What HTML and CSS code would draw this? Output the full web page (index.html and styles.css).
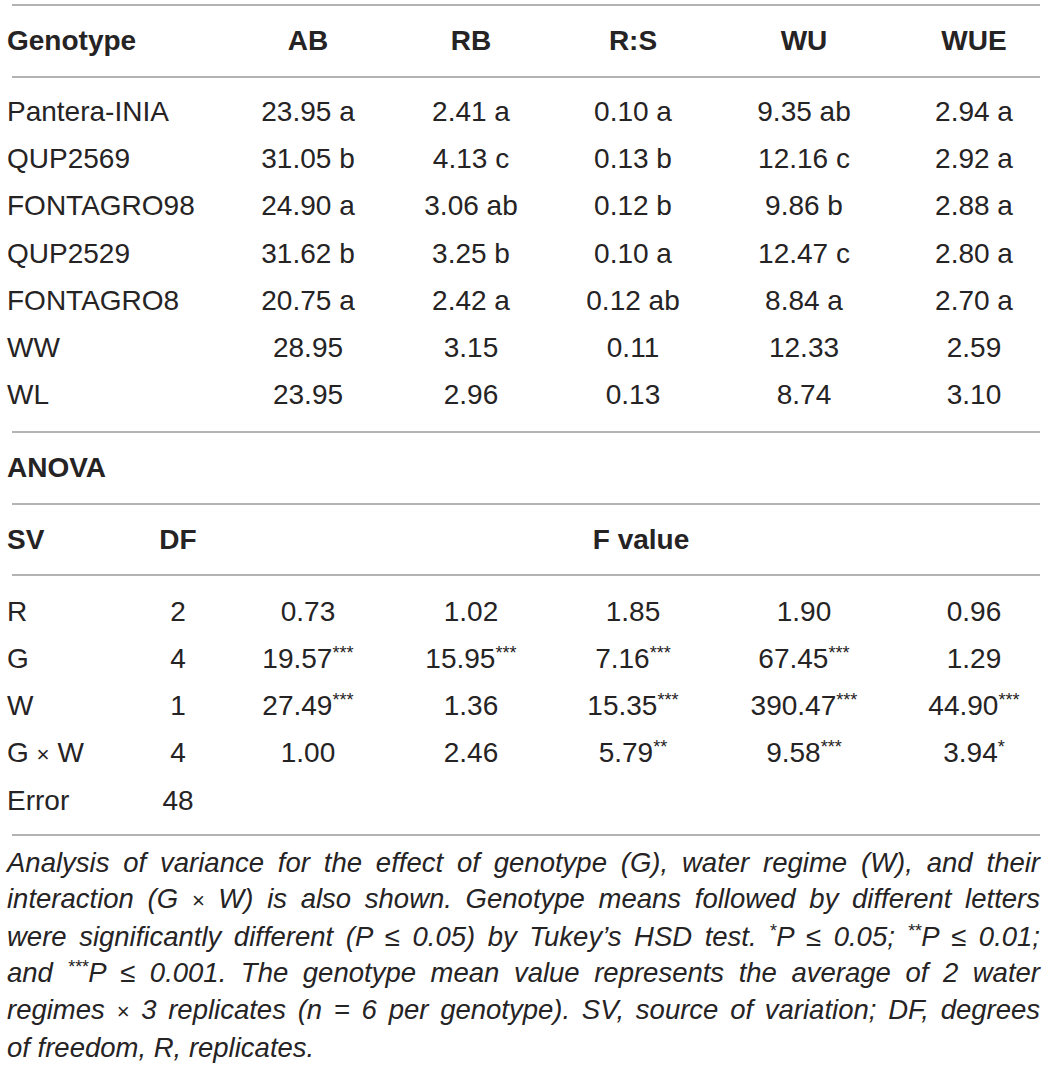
FILE: index.html
```html
<!DOCTYPE html>
<html lang="en">
<head>
    <meta charset="UTF-8">
    <meta name="viewport" content="width=device-width, initial-scale=1.0">
    <title>Genotype and ANOVA table</title>
    <link rel="stylesheet" href="styles.css">
</head>
<body>
    <div class="table">
        <div class="rule"></div>

        <div class="grid head">
            <div class="name span2">Genotype</div>
            <div>AB</div>
            <div>RB</div>
            <div>R:S</div>
            <div>WU</div>
            <div class="last">WUE</div>
        </div>

        <div class="rule"></div>

        <div class="grid body body-top">
            <div class="name span2">Pantera-INIA</div>
            <div>23.95 a</div><div>2.41 a</div><div>0.10 a</div><div>9.35 ab</div><div class="last">2.94 a</div>

            <div class="name span2">QUP2569</div>
            <div>31.05 b</div><div>4.13 c</div><div>0.13 b</div><div>12.16 c</div><div class="last">2.92 a</div>

            <div class="name span2">FONTAGRO98</div>
            <div>24.90 a</div><div>3.06 ab</div><div>0.12 b</div><div>9.86 b</div><div class="last">2.88 a</div>

            <div class="name span2">QUP2529</div>
            <div>31.62 b</div><div>3.25 b</div><div>0.10 a</div><div>12.47 c</div><div class="last">2.80 a</div>

            <div class="name span2">FONTAGRO8</div>
            <div>20.75 a</div><div>2.42 a</div><div>0.12 ab</div><div>8.84 a</div><div class="last">2.70 a</div>

            <div class="name span2">WW</div>
            <div>28.95</div><div>3.15</div><div>0.11</div><div>12.33</div><div class="last">2.59</div>

            <div class="name span2">WL</div>
            <div>23.95</div><div>2.96</div><div>0.13</div><div>8.74</div><div class="last">3.10</div>
        </div>

        <div class="rule"></div>

        <div class="section">ANOVA</div>

        <div class="rule"></div>

        <div class="grid head head-anova">
            <div class="name">SV</div>
            <div>DF</div>
            <div class="fvalue">F value</div>
        </div>

        <div class="rule"></div>

        <div class="grid body body-anova">
            <div class="name">R</div><div>2</div>
            <div>0.73</div><div>1.02</div><div>1.85</div><div>1.90</div><div class="last">0.96</div>

            <div class="name">G</div><div>4</div>
            <div>19.57<sup>***</sup></div><div>15.95<sup>***</sup></div><div>7.16<sup>***</sup></div><div>67.45<sup>***</sup></div><div class="last">1.29</div>

            <div class="name">W</div><div>1</div>
            <div>27.49<sup>***</sup></div><div>1.36</div><div>15.35<sup>***</sup></div><div>390.47<sup>***</sup></div><div class="last">44.90<sup>***</sup></div>

            <div class="name">G <span class="times">×</span> W</div><div>4</div>
            <div>1.00</div><div>2.46</div><div>5.79<sup>**</sup></div><div>9.58<sup>***</sup></div><div class="last">3.94<sup>*</sup></div>

            <div class="name">Error</div><div>48</div>
            <div></div><div></div><div></div><div></div><div class="last"></div>
        </div>

        <div class="rule"></div>

        <p class="note">
            <span class="line">Analysis of variance for the effect of genotype (G), water regime (W), and their</span>
            <span class="line">interaction (G <span class="times">×</span> W) is also shown. Genotype means followed by different letters</span>
            <span class="line">were significantly different (P ≤ 0.05) by Tukey’s HSD test. <sup>*</sup>P ≤ 0.05; <sup>**</sup>P ≤ 0.01;</span>
            <span class="line">and <sup>***</sup>P ≤ 0.001. The genotype mean value represents the average of 2 water</span>
            <span class="line">regimes <span class="times">×</span> 3 replicates (n = 6 per genotype). SV, source of variation; DF, degrees</span>
            <span class="line end">of freedom, R, replicates.</span>
        </p>
    </div>
</body>
</html>
```

FILE: styles.css
```css
* {
    margin: 0;
    padding: 0;
    box-sizing: border-box;
}

body {
    background: #ffffff;
    color: #262324;
    font-family: 'Liberation Sans', Arial, Helvetica, sans-serif;
    font-size: 28px;
}

.table {
    width: 1040px;
    padding: 4px 0 0 7px;
}

.rule {
    height: 2px;
    margin-left: 5px;
    background-color: #b3b3b3;
}

.grid {
    display: grid;
    grid-template-columns: 123px 96px 164px 162px 162px 180px 1fr;
    text-align: center;
    white-space: nowrap;
}

.grid .name {
    text-align: left;
}

.grid .span2 {
    grid-column: span 2;
}

.grid .last {
    padding-left: 14px;
}

.head {
    height: 70px;
    line-height: 70px;
    font-weight: bold;
}

.head-anova {
    height: 69px;
    line-height: 69px;
}

.head .fvalue {
    grid-column: span 5;
    padding-left: 16px;
}

.body {
    grid-auto-rows: 47.2px;
    line-height: 47.2px;
}

.body-top {
    padding: 10px 0 12.6px;
}

.body-anova {
    padding: 12px 0 10px;
}

.section {
    height: 70px;
    line-height: 70px;
    font-weight: bold;
}

sup {
    font-size: 0.65em;
    line-height: 0;
    vertical-align: 0.5em;
}

.times {
    font-size: 0.8em;
}

.note {
    padding-top: 9px;
    font-size: 27.5px;
    line-height: 36.2px;
    font-style: italic;
}

.note .line {
    display: block;
    text-align: justify;
    text-align-last: justify;
}

.note .line.end {
    text-align-last: left;
}
```
